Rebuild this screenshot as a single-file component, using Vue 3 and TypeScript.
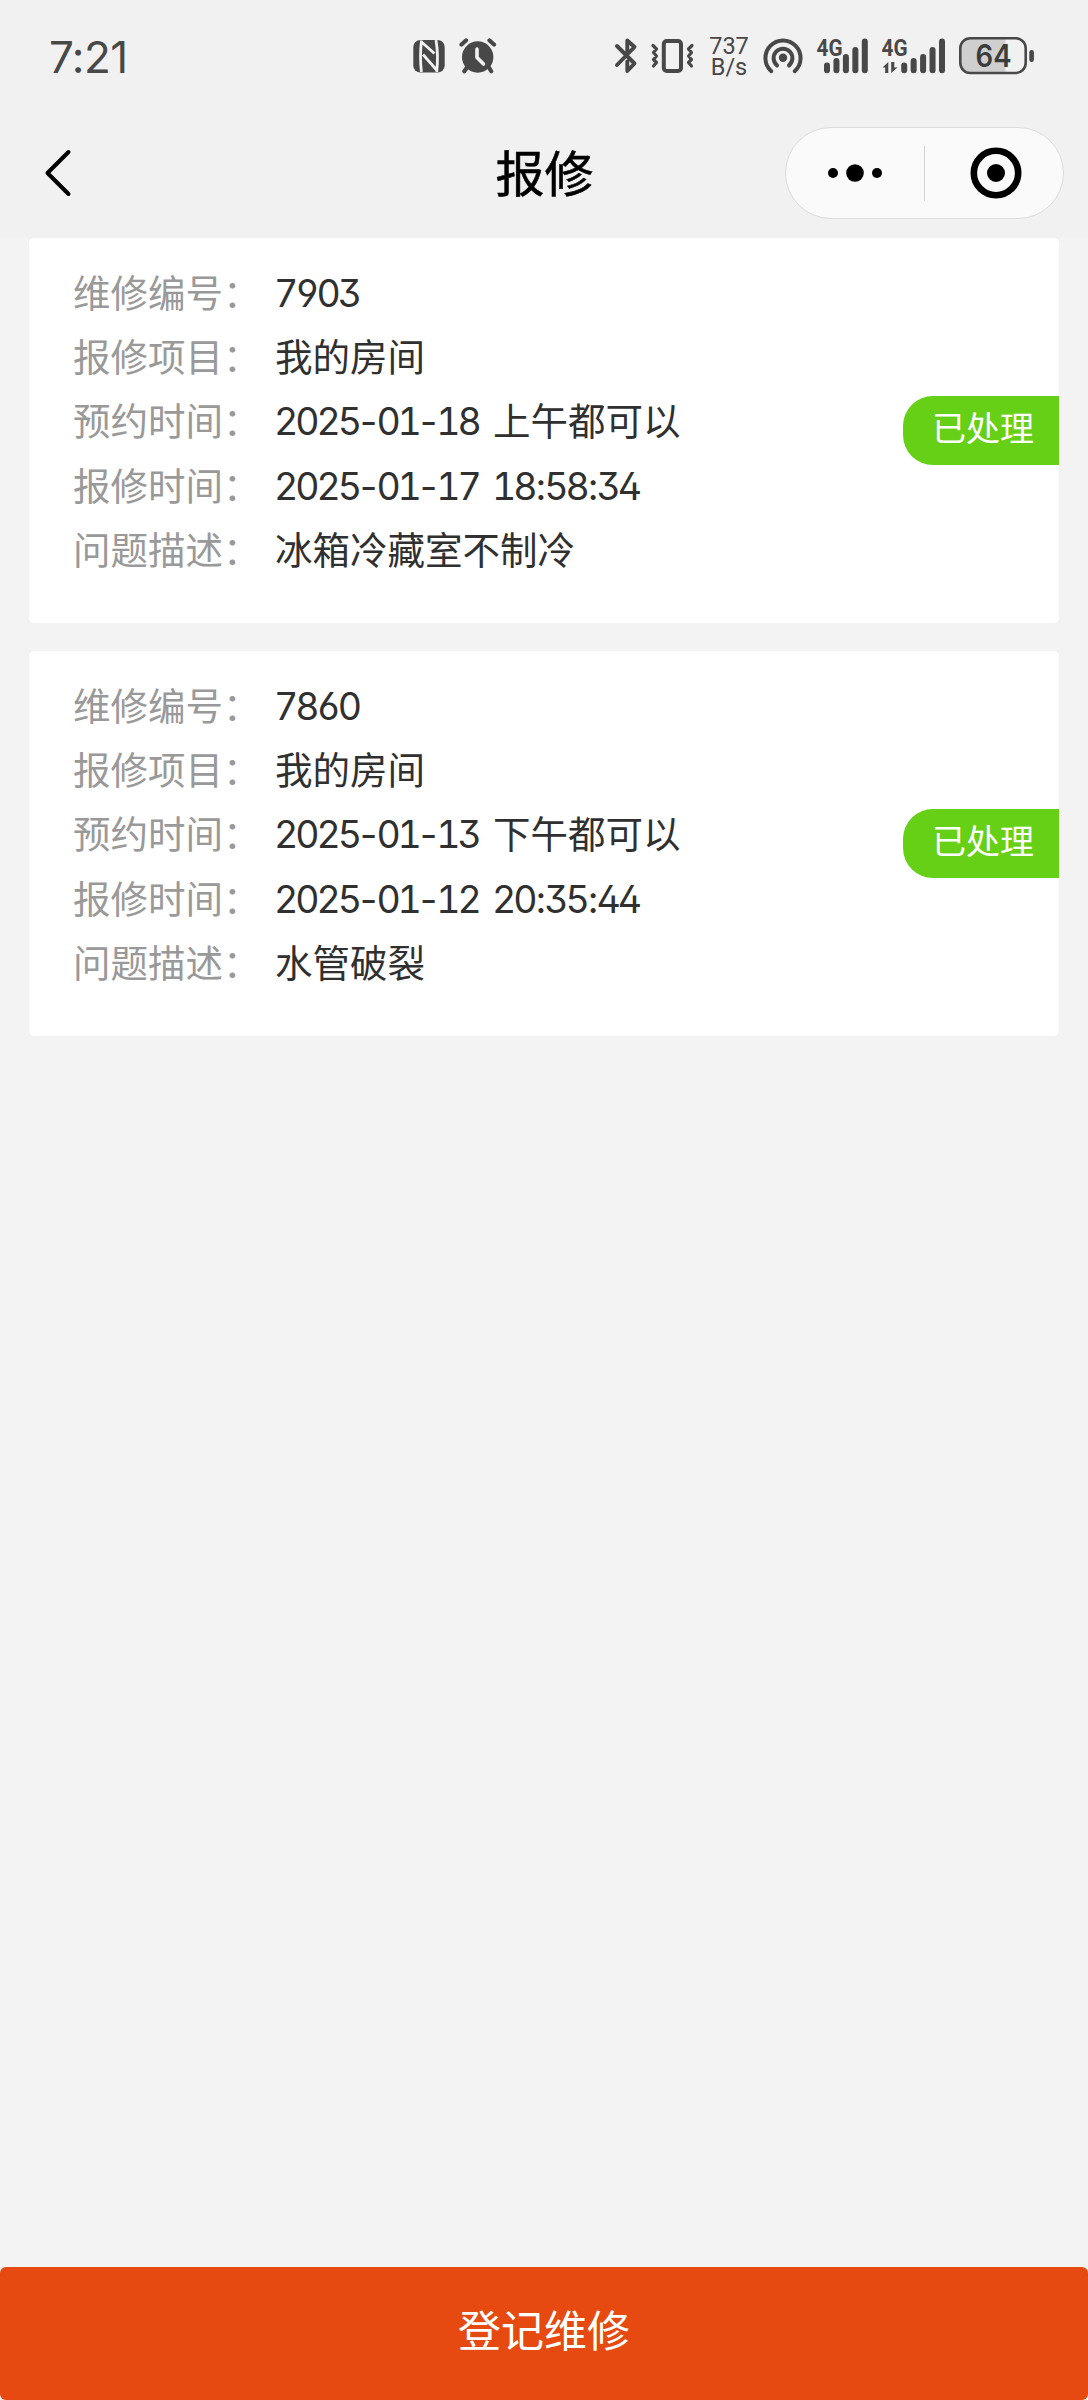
<script setup lang="ts">
interface Repair {
  id: string
  item: string
  date: string
  slot: string
  createdDate: string
  createdTime: string
  issue: string
  status: string
}

const repairs: Repair[] = [
  {
    id: '7903',
    item: '我的房间',
    date: '2025-01-18',
    slot: '上午都可以',
    createdDate: '2025-01-17',
    createdTime: '18:58:34',
    issue: '冰箱冷藏室不制冷',
    status: '已处理',
  },
  {
    id: '7860',
    item: '我的房间',
    date: '2025-01-13',
    slot: '下午都可以',
    createdDate: '2025-01-12',
    createdTime: '20:35:44',
    issue: '水管破裂',
    status: '已处理',
  },
]

interface Bar {
  x: number
  y: number
}

// Splits a date or a time into digit runs and separators, which are spaced differently.
const parts = (value: string): string[] => value.split(/([-:])/)
const partClass = (part: string): string => (part === '-' ? 'dash' : part === ':' ? 'colon' : 'digits')

const barTops = [65.5, 61, 57, 50, 41.5]
const bars = (start: number): Bar[] => barTops.map((y, i) => ({ x: start + i * 9.45, y }))
const simOne = bars(827)
const simTwo = bars(904.2)
</script>

<template>
  <div class="page">
    <header class="top">
      <div class="status">
        <span class="clock">7:21</span>
        <svg class="icon nfc" viewBox="413 36 32 40" width="32" height="40">
          <rect x="413.3" y="40" width="31.4" height="32.5" rx="7" fill="#484848" />
          <path d="M421.5 40.5Q419.6 56 421.4 72M421 41.5L434.5 53.5M436 40Q438.6 56 436.7 72M423 54.5L437 70.5" fill="none" stroke="#f1f1f1" stroke-width="2.8" />
        </svg>
        <svg class="icon alarm" viewBox="459 36 38 40" width="38" height="40">
          <path d="M461.5 44.5L466 40.5M494 44.5L489.5 40.5M467 67.5L464.3 71.2M489 67.5L491.2 71.2" fill="none" stroke="#484848" stroke-width="4.2" stroke-linecap="round" />
          <circle cx="477.7" cy="57" r="15.7" fill="#484848" />
          <path d="M477 49V57.5L483.5 64" fill="none" stroke="#f1f1f1" stroke-width="3.6" stroke-linecap="round" stroke-linejoin="round" />
        </svg>
        <svg class="icon bluetooth" viewBox="613 36 26 40" width="26" height="40">
          <path d="M617 46L634.5 63.5L627.3 71V61.5M617 65L634.5 47L627.3 40.5V53" fill="none" stroke="#484848" stroke-width="3.9" stroke-linecap="round" stroke-linejoin="round" />
        </svg>
        <svg class="icon vibrate" viewBox="649 36 48 40" width="48" height="40">
          <g fill="none" stroke="#484848" stroke-linecap="round" stroke-linejoin="round">
            <rect x="663.8" y="41" width="17.2" height="30" rx="3" stroke-width="4" />
            <path d="M653 45.5L656.5 49L653.5 52.5L656.5 56L653.5 59.5L656.5 62.5L653.5 66M692 45.5L688.5 49L691.5 52.5L688.5 56L691.5 59.5L688.5 62.5L691.5 66" stroke-width="3.2" />
          </g>
        </svg>
        <div class="speed"><span>737</span><span>B/s</span></div>
        <svg class="icon hotspot" viewBox="762 36 42 40" width="42" height="40">
          <circle cx="783" cy="57.7" r="4.2" fill="#484848" />
          <path d="M771.3 71.2A17.6 17.6 0 1 1 794.7 71.2M777 65.4A9.4 9.4 0 1 1 789 65.4" fill="none" stroke="#484848" stroke-width="4" stroke-linecap="round" />
        </svg>
        <svg class="icon sim-one" viewBox="816 34 54 42" width="54" height="42">
          <text x="816.5" y="55.5" class="net" textLength="26" lengthAdjust="spacingAndGlyphs">4G</text>
          <line v-for="b in simOne" :key="b.x" :x1="b.x" :x2="b.x" :y1="b.y" y2="70.2" class="bar" />
        </svg>
        <svg class="icon sim-two" viewBox="881 34 66 42" width="66" height="42">
          <text x="881.5" y="55.5" class="net" textLength="26" lengthAdjust="spacingAndGlyphs">4G</text>
          <path d="M882.5 67.5L888.3 62V73H885.2V67.5ZM897.5 67.5L891.2 73V62H894.3V67.5Z" fill="#484848" />
          <line v-for="b in simTwo" :key="b.x" :x1="b.x" :x2="b.x" :y1="b.y" y2="70.2" class="bar" />
        </svg>
        <svg class="icon battery" viewBox="958 36 78 40" width="78" height="40">
          <path d="M1005.5 38.5V73H971Q960.5 73 960.5 62V49.5Q960.5 38.5 971 38.5Z" fill="#cfcfcf" />
          <rect x="960.3" y="38.2" width="65.4" height="34.8" rx="10" fill="none" stroke="#484848" stroke-width="2.6" />
          <rect x="1029.3" y="50" width="4.6" height="12" rx="2.2" fill="#484848" />
          <text x="975.5" y="67.2" class="level" textLength="36" lengthAdjust="spacingAndGlyphs">64</text>
        </svg>
      </div>

      <nav class="nav">
        <svg class="back" viewBox="0 0 30 50" width="30" height="50">
          <path d="M25.5 4L4.5 25L25.5 46" fill="none" stroke="#000" stroke-width="4" stroke-linecap="round" stroke-linejoin="round" />
        </svg>
        <h1 class="title">报修</h1>
        <div class="capsule">
          <svg class="more" viewBox="0 0 60 20" width="60" height="20">
            <circle cx="8" cy="10" r="5" />
            <circle cx="30" cy="10" r="8.8" />
            <circle cx="52" cy="10" r="5" />
          </svg>
          <i class="divider"></i>
          <svg class="target" viewBox="0 0 52 52" width="52" height="52">
            <circle cx="26" cy="26" r="22.2" fill="none" stroke="#000" stroke-width="6.6" />
            <circle cx="26" cy="26" r="9" />
          </svg>
        </div>
      </nav>
    </header>

    <main class="list">
      <article v-for="r in repairs" :key="r.id" class="card">
        <dl class="rows">
          <div class="row"><dt>维修编号：</dt><dd><span class="digits">{{ r.id }}</span></dd></div>
          <div class="row"><dt>报修项目：</dt><dd>{{ r.item }}</dd></div>
          <div class="row">
            <dt>预约时间：</dt>
            <dd><span class="date"><span v-for="(p, i) in parts(r.date)" :key="i" :class="partClass(p)">{{ p }}</span></span><span>{{ r.slot }}</span></dd>
          </div>
          <div class="row">
            <dt>报修时间：</dt>
            <dd><span class="date"><span v-for="(p, i) in parts(r.createdDate)" :key="i" :class="partClass(p)">{{ p }}</span></span><span v-for="(p, i) in parts(r.createdTime)" :key="i" :class="partClass(p)">{{ p }}</span></dd>
          </div>
          <div class="row"><dt>问题描述：</dt><dd>{{ r.issue }}</dd></div>
        </dl>
        <span class="tag">{{ r.status }}</span>
      </article>
    </main>

    <button class="submit" type="button">登记维修</button>
  </div>
</template>

<style>
body {
  background: #f3f3f3;
}
</style>

<style scoped>
.page {
  display: flex;
  flex-direction: column;
  width: 1088px;
  height: 2400px;
  background: #f3f3f3;
  font-family: "Noto Sans CJK SC", sans-serif;
  color: #303030;
}

.top {
  flex: none;
  height: 238px;
  background: #f1f1f1;
}

.status {
  display: flex;
  align-items: center;
  height: 112px;
  padding-left: 49px;
  box-sizing: border-box;
  color: #484848;
}

.icon {
  display: block;
  flex: none;
}

.clock {
  width: 364px;
  font: 400 44px/60px Inter, sans-serif;
  letter-spacing: -0.6px;
  padding-top: 2px;
}

.alarm {
  margin-left: 14px;
}

.bluetooth {
  margin-left: 116px;
}

.vibrate {
  margin-left: 10px;
}

.speed {
  display: flex;
  flex-direction: column;
  align-items: center;
  width: 40px;
  margin-left: 12px;
  padding-top: 1px;
  font: 400 23.5px/21px Roboto, sans-serif;
}

.hotspot {
  margin-left: 13px;
}

.sim-one {
  margin-left: 12px;
}

.sim-two {
  margin-left: 11px;
}

.sim-one,
.sim-two {
  margin-bottom: 2px;
}

.battery {
  margin-left: 11px;
}

.net {
  font: 700 23px Roboto, sans-serif;
  fill: #484848;
}

.level {
  font: 600 31px Inter, sans-serif;
  fill: #3c3c3c;
}

.bar {
  stroke: #484848;
  stroke-width: 6;
  stroke-linecap: round;
}

.nav {
  display: grid;
  grid-template-columns: 1fr auto 1fr;
  align-items: center;
  height: 122px;
  padding: 0 24px 0 43px;
}

.back {
  display: block;
}

.title {
  margin: 0 18px 5px 0;
  font-size: 49px;
  font-weight: 400;
  line-height: 70px;
  color: #000;
  -webkit-text-stroke: 0.6px #000;
}

.capsule {
  justify-self: end;
  display: flex;
  align-items: center;
  box-sizing: border-box;
  width: 279px;
  height: 92px;
  padding-left: 39px;
  border: 1px solid #dcdcdc;
  border-radius: 46px;
  background: #fafafa;
}

.divider {
  width: 1px;
  height: 55px;
  margin: 0 45px 0 39px;
  background: #d4d4d4;
}

.list {
  display: flex;
  flex: 1;
  flex-direction: column;
  gap: 28px;
  padding: 0 29px;
}

.card {
  display: flex;
  justify-content: space-between;
  box-sizing: border-box;
  height: 385px;
  padding: 21px 0 0 44px;
  border-radius: 5px;
  background: #fff;
}

.rows {
  margin: 0;
}

.row {
  display: flex;
  align-items: baseline;
  height: 64.2px;
  font-size: 37.5px;
  line-height: 64px;
  white-space: nowrap;
}

dt {
  width: 202px;
  color: #999;
}

dd {
  display: flex;
  align-items: baseline;
  margin: 0;
}

.digits,
.dash,
.colon {
  font-family: Inter, sans-serif;
}

.digits {
  font-feature-settings: "ss01", "tnum";
  letter-spacing: -3.1px;
  margin-left: -1px;
  padding-right: 1px;
}

.dash {
  width: 17.5px;
  text-align: center;
}

.colon {
  width: 9.8px;
  text-align: center;
}

.date {
  display: flex;
  align-items: baseline;
  width: 218px;
}

.tag {
  width: 156px;
  height: 69px;
  margin-top: 137px;
  padding-left: 29px;
  box-sizing: border-box;
  border-radius: 30px 0 0 30px;
  background: #66d016;
  color: #fff;
  font-size: 34px;
  line-height: 62px;
}

.submit {
  flex: none;
  height: 133px;
  padding: 0 0 11px;
  border: 0;
  border-radius: 6px;
  background: #e64a10;
  color: #fff;
  font-family: inherit;
  font-size: 43px;
}
</style>
